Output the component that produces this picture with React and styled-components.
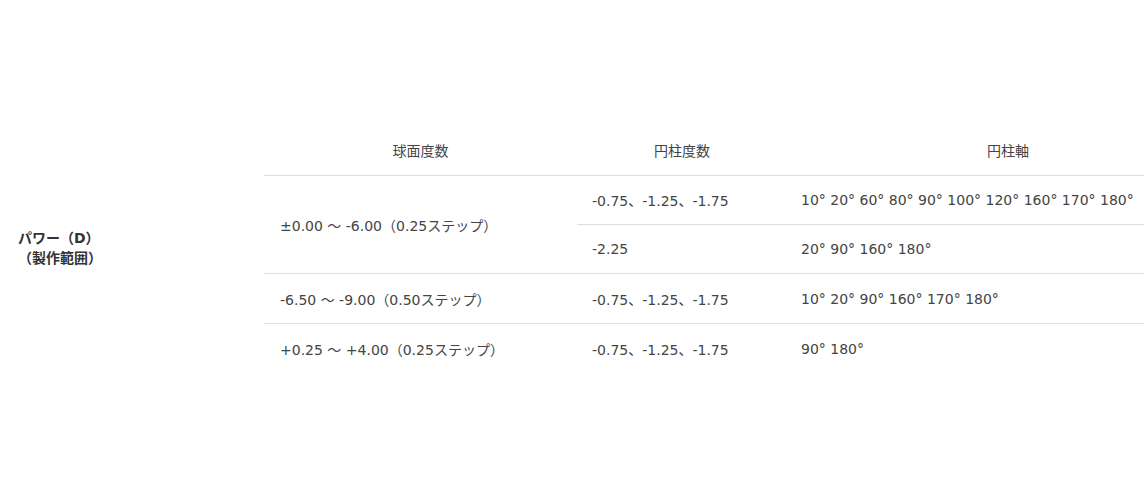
import React from 'react'
import styled, { createGlobalStyle } from 'styled-components'

const GlobalStyle = createGlobalStyle`
  html, body {
    margin: 0;
    padding: 0;
    background: #fff;
    overflow: hidden;
  }
  body {
    font-family: "DejaVu Sans", "Noto Sans CJK JP", sans-serif;
    color: #3a3a3a;
  }
`

export const Wrapper = styled.div`
  width: 1144px;
  height: 500px;
  overflow: hidden;
  padding-top: 124px;
  box-sizing: border-box;
`

export const Table = styled.table`
  width: 1229px;
  table-layout: fixed;
  border-collapse: collapse;
  font-size: 14px;
`

export const Label = styled.th`
  width: ${props => props.w || 'auto'};
  text-align: left;
  font-weight: 700;
  line-height: 1.4;
  padding: 0 0 0 18px;
  color: #333;
  vertical-align: middle;
`

export const HeadCell = styled.th`
  width: ${props => props.w};
  height: 51px;
  font-weight: 400;
  text-align: center;
  padding: 0;
  border-bottom: 1px solid #ddd;
  color: #444;
`

export const Cell = styled.td`
  height: ${props => props.tall ? '49px' : '48px'};
  padding: 0 0 0 ${props => props.pad || '15px'};
  border-bottom: ${props => props.last ? 'none' : '1px solid #ddd'};
  white-space: nowrap;
  color: #444;
  vertical-align: middle;
`

const rows = [
  { sph: '±0.00 ～ -6.00（0.25ステップ）', cyl: '-0.75、-1.25、-1.75', axis: '10° 20° 60° 80° 90° 100° 120° 160° 170° 180°', span: 2 },
  { cyl: '-2.25', axis: '20° 90° 160° 180°' },
  { sph: '-6.50 ～ -9.00（0.50ステップ）', cyl: '-0.75、-1.25、-1.75', axis: '10° 20° 90° 160° 170° 180°' },
  { sph: '+0.25 ～ +4.00（0.25ステップ）', cyl: '-0.75、-1.25、-1.75', axis: '90° 180°', last: true },
]

export default function App() {
  return (
    <Wrapper>
      <GlobalStyle />
      <Table>
        <tbody>
          <tr>
            <Label w="246px" rowSpan={5}>
              パワー（D）<br />（製作範囲）
            </Label>
            <HeadCell w="313px">球面度数</HeadCell>
            <HeadCell w="210px">円柱度数</HeadCell>
            <HeadCell w="442px">円柱軸</HeadCell>
          </tr>
          {rows.map((r, i) => (
            <tr key={i}>
              {r.sph && (
                <Cell pad="16px" rowSpan={r.span || 1} last={r.last} tall={i > 1}>
                  {r.sph}
                </Cell>
              )}
              <Cell last={r.last} tall={i > 1}>{r.cyl}</Cell>
              <Cell pad="14px" last={r.last} tall={i > 1}>{r.axis}</Cell>
            </tr>
          ))}
        </tbody>
      </Table>
    </Wrapper>
  )
}
